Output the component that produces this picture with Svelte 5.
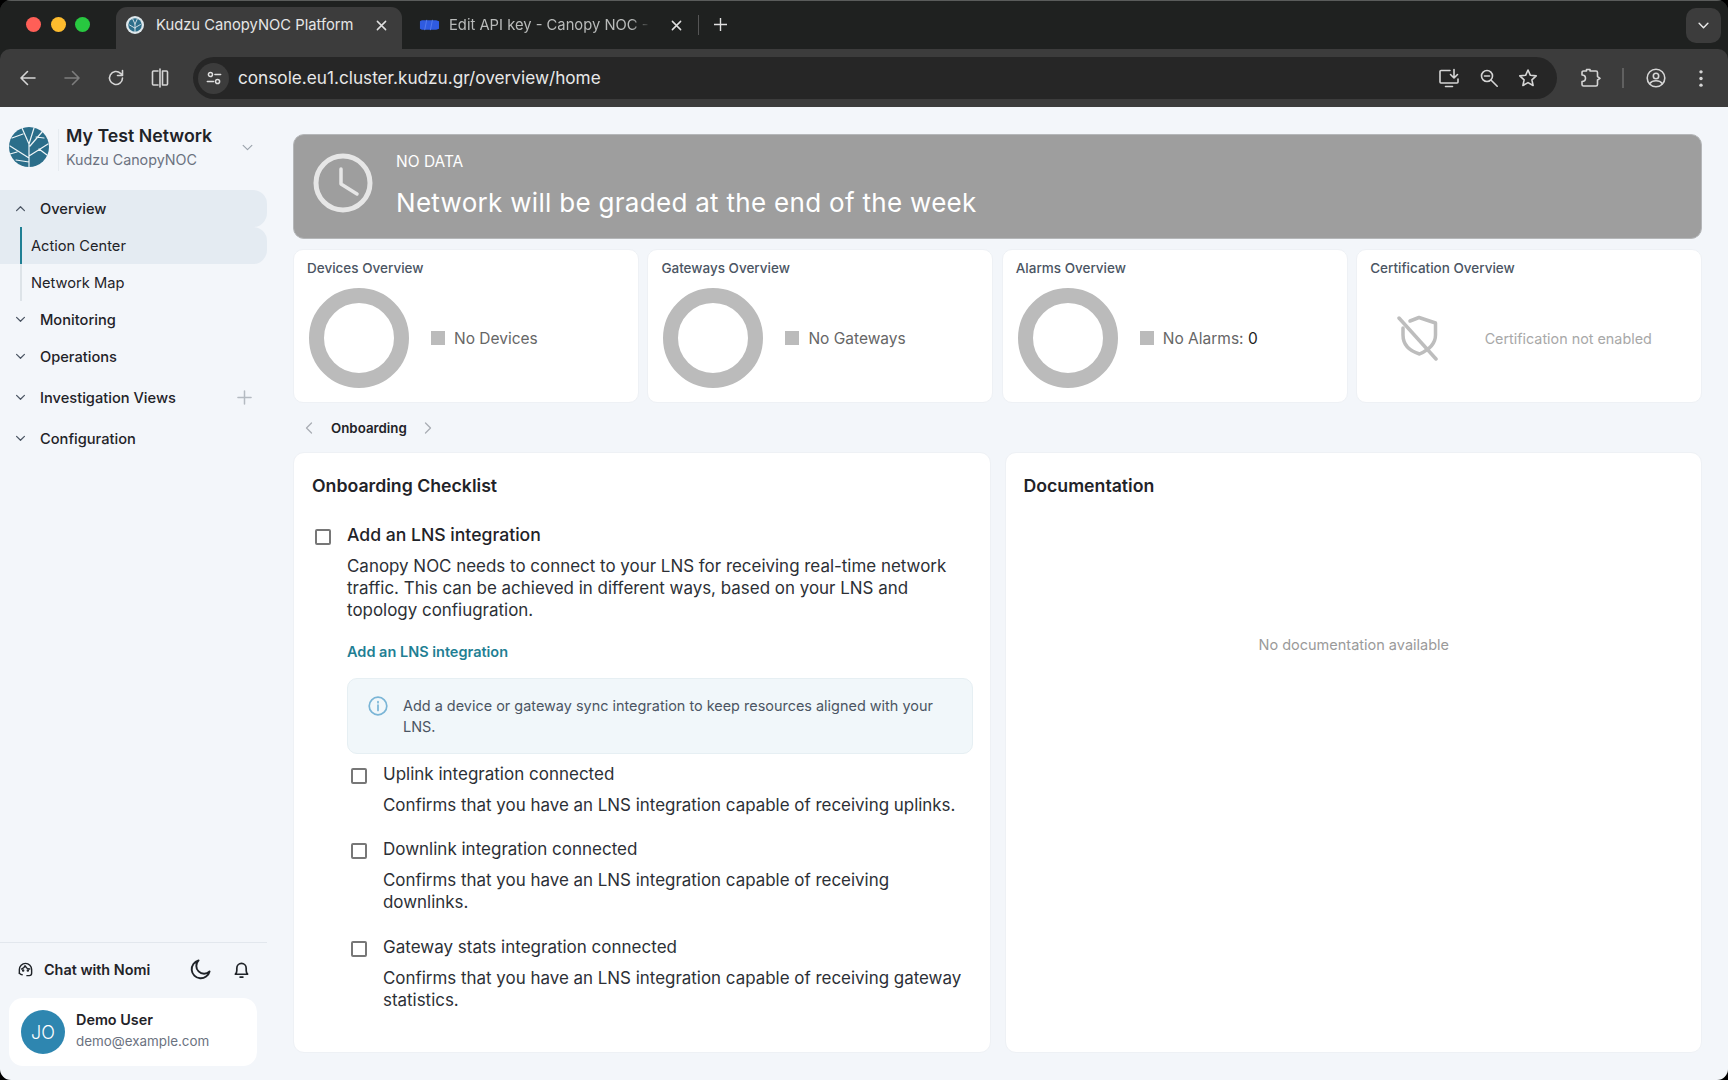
<script>
	const navTop = [
		{ label: 'Monitoring' },
		{ label: 'Operations' },
		{ label: 'Investigation Views', add: true },
		{ label: 'Configuration' }
	];

	const overviewCards = [
		{ title: 'Devices Overview', legend: 'No Devices' },
		{ title: 'Gateways Overview', legend: 'No Gateways' },
		{ title: 'Alarms Overview', legend: 'No Alarms:', count: '0' }
	];

	const checks = [
		{
			label: 'Uplink integration connected',
			desc: 'Confirms that you have an LNS integration capable of receiving uplinks.'
		},
		{
			label: 'Downlink integration connected',
			desc: 'Confirms that you have an LNS integration capable of receiving downlinks.'
		},
		{
			label: 'Gateway stats integration connected',
			desc: 'Confirms that you have an LNS integration capable of receiving gateway statistics.'
		}
	];
</script>

<div class="window">
	<div class="tabstrip">
		<div class="lights">
			<span class="light red"></span>
			<span class="light yellow"></span>
			<span class="light green"></span>
		</div>
		<div class="tab active">
			<svg class="favicon" viewBox="0 0 40 40">
				<circle cx="20" cy="20" r="20" fill="#dfe8ec" />
				<circle cx="20" cy="20" r="15" fill="#2b6e8a" />
				<path d="M20 35V18L15 7M20 18l5-11M20 27 8 20M20 26l12-7" stroke="#dfe8ec" stroke-width="2" fill="none" />
			</svg>
			<span class="tab-title">Kudzu CanopyNOC Platform</span>
			<svg class="tab-x" viewBox="0 0 12 12"><path d="M1.500 1.500l9 9M10.500 1.500l-9 9" /></svg>
		</div>
		<div class="tab second">
			<svg class="favicon wide" viewBox="0 0 22 14">
				<path d="M3 2h15l3 1v8l-3 1H3L1 11V3z" fill="#2f5be0" />
				<path d="M8 2 6 12M14 2l-2 10" stroke="#5f84ee" stroke-width=".8" />
			</svg>
			<span class="tab-title dim">Edit API key - Canopy NOC -</span>
			<svg class="tab-x" viewBox="0 0 12 12"><path d="M1.500 1.500l9 9M10.500 1.500l-9 9" /></svg>
		</div>
		<span class="tab-sep"></span>
		<svg class="tab-plus" viewBox="0 0 14 14"><path d="M7 0v14M0 7h14" /></svg>
		<div class="tab-menu">
			<svg viewBox="0 0 12 8"><path d="M1 1.500l5 5 5-5" /></svg>
		</div>
	</div>

	<div class="toolbar">
		<div class="nav-btns">
			<svg class="tool" viewBox="0 0 20 20"><path d="M17 10H3.500M9.500 3.500 3 10l6.500 6.500" /></svg>
			<svg class="tool off" viewBox="0 0 20 20"><path d="M3 10h13.500M10.500 3.500 17 10l-6.500 6.500" /></svg>
			<svg class="tool" viewBox="0 0 20 20"><path d="M16.500 10a6.500 6.500 0 1 1-2-4.700L16.500 7.500M16.500 2.500v5h-5" /></svg>
			<svg class="tool" viewBox="0 0 20 20"><path d="M8 3H3.500A1 1 0 0 0 2.500 4v12a1 1 0 0 0 1 1H8M10 1v18M12.500 3h4a1 1 0 0 1 1 1v12a1 1 0 0 1-1 1h-4z" /></svg>
		</div>
		<div class="omnibox">
			<span class="chip">
				<svg viewBox="0 0 18 18">
					<circle cx="5" cy="5" r="2.300" />
					<path d="M10 5h6.500M1.500 13H8.500" />
					<circle cx="13" cy="13" r="2.300" />
				</svg>
			</span>
			<span class="url">console.eu1.cluster.kudzu.gr/overview/home</span>
			<div class="omni-icons">
				<svg class="tool" viewBox="0 0 22 20"><path d="M12 2.500H3a1 1 0 0 0-1 1V14a1 1 0 0 0 1 1h16a1 1 0 0 0 1-1v-3M16 1.500V10M12.500 6.500 16 10l3.500-3.500M7.500 18.500h7" /></svg>
				<svg class="tool" viewBox="0 0 20 20"><circle cx="8" cy="8" r="5.500" /><path d="M5.500 8h5M12.200 12.200l6 6" /></svg>
				<svg class="tool" viewBox="0 0 20 20"><path d="M10 2l2.400 5.300 5.800.6-4.300 3.900 1.200 5.700L10 14.600l-5.100 2.900 1.200-5.700-4.300-3.900 5.800-.6z" /></svg>
			</div>
		</div>
		<div class="chrome-end">
			<svg class="tool" viewBox="0 0 20 20"><path d="M1 4.500A1.500 1.500 0 0 1 2.500 3H5.500V1.500H9V3H15A1.500 1.500 0 0 1 16.500 4.500V8.500L19 10.300 16.500 12V16.500A1.500 1.500 0 0 1 15 18H2.500A1.500 1.500 0 0 1 1 16.500V13.500C3.500 13.500 4.500 12 4.500 10.300S3.500 7 1 7Z" /></svg>
			<span class="end-sep"></span>
			<svg class="tool" viewBox="0 0 20 20"><circle cx="10" cy="10" r="8.800" /><circle cx="10" cy="8" r="2.700" /><path d="M3.800 15.500c1.500-2 3.700-2.700 6.200-2.700s4.700.7 6.200 2.700" /></svg>
			<svg class="dots" viewBox="0 0 6 20"><circle cx="3" cy="3" r="1.800" /><circle cx="3" cy="10" r="1.800" /><circle cx="3" cy="17" r="1.800" /></svg>
		</div>
	</div>

	<div class="page">
		<aside class="sidebar">
			<div class="org">
				<svg class="logo" viewBox="0 0 40 40">
					<circle cx="20" cy="20" r="20" fill="#2b6e8a" />
					<path d="M20 40V17L13 1M20 17l5-16M21 19l12-14M20 31 1 19M20 29l19-12M20 35 7 33M8 25 1 27M30 22l8 6M27 10l8 1M14 7 3 11"
						stroke="#eef5f7" stroke-width="1.200" fill="none" />
				</svg>
				<div class="org-text">
					<div class="org-name">My Test Network</div>
					<div class="org-sub">Kudzu CanopyNOC</div>
				</div>
				<svg class="org-chevron" viewBox="0 0 12 8"><path d="M1 1.500l5 5 5-5" /></svg>
			</div>

			<nav class="nav">
				<div class="nav-row open">
					<svg class="chev" viewBox="0 0 12 8"><path d="M1.500 6.500l4.500-4.500 4.500 4.500" /></svg>
					<span>Overview</span>
				</div>
				<div class="sub-row current"><span class="sub-label">Action Center</span></div>
				<div class="sub-row"><span class="sub-label">Network Map</span></div>
				{#each navTop as item}
					<div class="nav-row" class:tall={item.add}>
						<svg class="chev" viewBox="0 0 12 8"><path d="M1.500 1.500l4.500 4.500 4.500-4.500" /></svg>
						<span>{item.label}</span>
						{#if item.add}
							<svg class="nav-add" viewBox="0 0 16 16"><path d="M8 1v14M1 8h14" /></svg>
						{/if}
					</div>
				{/each}
			</nav>

			<div class="side-foot">
				<div class="foot-row">
					<svg class="nomi" viewBox="0 0 18 18">
						<path d="M2.500 13V9a6.500 6.500 0 0 1 13 0v4c0 1.500-1 2.500-2.500 2.500h-2.500" />
						<path d="M5 8.500C6.500 8 8 6.500 8.500 5c1 2 3 3.500 5 3.500" />
						<path d="M2.500 13c1 1 2 1.500 3 1.500" />
						<circle cx="6.500" cy="10" r=".6" />
						<circle cx="11.500" cy="10" r=".6" />
					</svg>
					<span class="chat">Chat with Nomi</span>
					<svg class="moon" viewBox="0 0 22 22"><path d="M9 1.500a9.500 9.500 0 1 0 11.500 11.500A8 8 0 0 1 9 1.500z" /></svg>
					<svg class="bell" viewBox="0 0 16 18"><path d="M1.500 13.500c1-1 1.500-2 1.500-4V7a5 5 0 0 1 10 0v2.500c0 2 .5 3 1.500 4zM6.500 16.500h3" /></svg>
				</div>
				<div class="user">
					<div class="avatar">JO</div>
					<div class="user-text">
						<div class="user-name">Demo User</div>
						<div class="user-mail">demo@example.com</div>
					</div>
				</div>
			</div>
		</aside>

		<main class="main">
			<section class="banner">
				<svg class="clock" viewBox="0 0 60 60">
					<circle cx="30" cy="30" r="27" />
					<path class="hands" d="M28 16V31L44 41" />
				</svg>
				<div class="banner-text">
					<div class="banner-tag">NO DATA</div>
					<div class="banner-msg">Network will be graded at the end of the week</div>
				</div>
			</section>

			<section class="cards">
				{#each overviewCards as card}
					<div class="card">
						<div class="card-title">{card.title}</div>
						<div class="card-body">
							<div class="donut"></div>
							<span class="swatch"></span>
							<span class="legend">{card.legend}{#if card.count}&nbsp;<b>{card.count}</b>{/if}</span>
						</div>
					</div>
				{/each}
				<div class="card">
					<div class="card-title">Certification Overview</div>
					<div class="card-body cert">
						<svg class="shield" viewBox="0 0 42 46">
							<path d="M13 6 22 2.500 38.500 8V20C38.500 29 31.500 35 22.500 39 13 36 6 30 6 20V13" />
							<path d="M2 3 39 44" />
						</svg>
						<span class="cert-text">Certification not enabled</span>
					</div>
				</div>
			</section>

			<div class="pager">
				<svg class="pager-chev" viewBox="0 0 8 12"><path d="M6.500 1 1.500 6l5 5" /></svg>
				<span>Onboarding</span>
				<svg class="pager-chev" viewBox="0 0 8 12"><path d="M1.500 1l5 5-5 5" /></svg>
			</div>

			<section class="panels">
				<div class="panel">
					<h2>Onboarding Checklist</h2>
					<div class="task">
						<span class="box"></span>
						<div class="task-main">
							<div class="task-title">Add an LNS integration</div>
							<p class="task-desc">Canopy NOC needs to connect to your LNS for receiving real-time network traffic. This can be achieved in different ways, based on your LNS and topology confiugration.</p>
							<div class="task-link">Add an LNS integration</div>
							<div class="info">
								<svg class="info-icon" viewBox="0 0 20 20">
									<circle cx="10" cy="10" r="8.800" />
									<path d="M10 9v5.500M10 5.500v1.200" />
								</svg>
								<span>Add a device or gateway sync integration to keep resources aligned with your LNS.</span>
							</div>
						</div>
					</div>
					<div class="checks">
						{#each checks as check}
							<div class="check">
								<span class="box"></span>
								<div>
									<div class="check-label">{check.label}</div>
									<div class="check-desc">{check.desc}</div>
								</div>
							</div>
						{/each}
					</div>
				</div>

				<div class="panel docs">
					<h2>Documentation</h2>
					<div class="docs-empty">No documentation available</div>
				</div>
			</section>
		</main>
	</div>
</div>

<style>
	:global(body) {
		background-color: #000;
		font-family: Inter, "Noto Sans", sans-serif;
	}

	svg {
		flex: none;
		display: block;
		fill: none;
		stroke-linecap: round;
		stroke-linejoin: round;
	}

	.window {
		width: 1728px;
		height: 1080px;
		display: flex;
		flex-direction: column;
		overflow: hidden;
		border-radius: 11px;
		background: #1f2120;
	}

	/* browser chrome */
	.tabstrip {
		height: 49px;
		flex: none;
		display: flex;
		align-items: flex-end;
		background: #1f2120;
		border-top: 1px solid #5a5c5b;
		box-sizing: border-box;
	}

	.lights {
		width: 116px;
		flex: none;
		height: 48px;
		padding: 0 0 2px 26px;
		box-sizing: border-box;
		display: flex;
		gap: 9.500px;
		align-items: center;
	}

	.light {
		width: 15px;
		height: 15px;
		border-radius: 50%;
	}
	.red { background: #ff5f57; }
	.yellow { background: #febc2e; }
	.green { background: #28c840; }

	.tab {
		height: 42px;
		display: flex;
		align-items: center;
		box-sizing: border-box;
		padding-bottom: 6px;
		color: #e6e6e6;
		font-size: 14.750px;
		white-space: nowrap;
	}

	.tab.active {
		width: 286px;
		background: #3c3c3c;
		border-radius: 11px 11px 0 0;
		padding-left: 10px;
	}

	.tab.second {
		width: 298px;
		padding-left: 17px;
	}

	.favicon {
		width: 18px;
		height: 18px;
		margin-right: 12px;
	}

	.favicon.wide {
		width: 21px;
		height: 14px;
		margin-right: 9px;
	}

	.tab-title {
		width: 220px;
	}

	.tab-title.dim {
		width: 202px;
		color: #b9bbba;
		-webkit-mask-image: linear-gradient(to right, #000 90%, transparent);
		mask-image: linear-gradient(to right, #000 90%, transparent);
	}

	.tab-x {
		width: 11px;
		height: 11px;
		stroke: #e0e0e0;
		stroke-width: 1.600;
	}

	.tab.second .tab-x {
		margin-left: 20px;
	}

	.tab-sep {
		width: 1px;
		height: 20px;
		background: #555;
		margin: 0 15px 14px -2px;
	}

	.tab-plus {
		width: 13px;
		height: 13px;
		stroke: #e0e0e0;
		stroke-width: 1.500;
		margin-bottom: 18px;
	}

	.tab-menu {
		margin-left: auto;
		margin-right: 7px;
		margin-bottom: 6px;
		width: 35px;
		height: 35px;
		border-radius: 10px;
		background: #3c3c3c;
		display: flex;
		align-items: center;
		justify-content: center;
	}

	.tab-menu svg {
		width: 11px;
		height: 7px;
		stroke: #e8e8e8;
		stroke-width: 1.700;
	}

	.toolbar {
		height: 58px;
		flex: none;
		display: flex;
		align-items: center;
		background: #3c3c3c;
		border-radius: 10px 10px 0 0;
	}

	.tool {
		width: 20px;
		height: 20px;
		stroke: #d5d5d5;
		stroke-width: 1.600;
	}

	.tool.off {
		stroke: #7d7d7d;
	}

	.nav-btns {
		width: 193px;
		flex: none;
		display: flex;
		gap: 24px;
		padding-left: 18px;
		box-sizing: border-box;
	}

	.omnibox {
		width: 1364px;
		height: 42px;
		flex: none;
		display: flex;
		align-items: center;
		background: #262626;
		border-radius: 21px;
		padding-left: 5px;
		box-sizing: border-box;
	}

	.chip {
		width: 31px;
		height: 31px;
		border-radius: 50%;
		background: #3c3c3c;
		display: flex;
		align-items: center;
		justify-content: center;
	}

	.chip svg {
		width: 16px;
		height: 16px;
		stroke: #dedede;
		stroke-width: 1.700;
	}

	.url {
		margin-left: 9px;
		margin-top: -1px;
		font-size: 17.200px;
		color: #e8e8e8;
	}

	.omni-icons {
		margin-left: auto;
		margin-right: 19px;
		display: flex;
		gap: 19px;
		align-items: center;
	}

	.omni-icons .tool:first-child {
		width: 22px;
	}

	.chrome-end {
		display: flex;
		align-items: center;
		padding-left: 24px;
	}

	.end-sep {
		width: 2px;
		height: 20px;
		background: #606060;
		margin: 0 22px 0 21px;
	}

	.dots {
		width: 6px;
		height: 19px;
		fill: #d5d5d5;
		margin-left: 32px;
	}

	/* app */
	.page {
		flex: 1;
		min-height: 0;
		display: flex;
		background: #f3f6fa;
		color: #1f2328;
	}

	.sidebar {
		width: 267px;
		flex: none;
		display: flex;
		flex-direction: column;
	}

	.org {
		height: 60px;
		box-sizing: border-box;
		display: flex;
		align-items: center;
		padding: 20px 14px 0 9px;
	}

	.logo {
		width: 40px;
		height: 40px;
	}

	.org-text {
		margin: 5px 0 0 9px;
		padding-left: 7px;
		border-left: 1px solid #e6ebf0;
	}

	.org-name {
		font-size: 17.750px;
		font-weight: 600;
		line-height: 22px;
		margin-top: -4px;
	}

	.org-sub {
		font-size: 14.300px;
		line-height: 22px;
		margin-top: 2px;
		color: #6b7280;
	}

	.org-chevron {
		width: 11px;
		height: 7px;
		stroke: #9aa2ab;
		stroke-width: 1.300;
		margin-left: auto;
	}

	.nav {
		margin-top: 23px;
		font-size: 14.650px;
	}

	.nav-row {
		height: 37px;
		display: flex;
		align-items: center;
		padding-left: 15px;
		font-weight: 500;
		border-radius: 0 14px 14px 0;
	}

	.nav-row.tall {
		height: 45px;
	}

	.nav-row.open,
	.sub-row.current {
		background: #e4ebf2;
	}

	.chev {
		width: 11px;
		height: 7px;
		stroke: #4b5563;
		stroke-width: 1.400;
		margin-right: 14px;
	}

	.nav-add {
		width: 15px;
		height: 15px;
		stroke: #b4bac1;
		stroke-width: 1.600;
		margin-left: auto;
		margin-right: 15px;
	}

	.sub-row {
		height: 37px;
		padding-left: 20px;
		display: flex;
		border-radius: 0 14px 14px 0;
	}

	.sub-label {
		flex: 1;
		display: flex;
		align-items: center;
		padding-left: 9px;
		border-left: 2px solid #dde3e8;
	}

	.sub-row.current .sub-label {
		border-left-color: #1f7f94;
	}

	.side-foot {
		margin-top: auto;
		border-top: 1px solid #e2e7ed;
		padding-bottom: 14px;
	}

	.foot-row {
		height: 55px;
		box-sizing: border-box;
		padding: 0 0 2px 17px;
		display: flex;
		align-items: center;
	}

	.nomi {
		width: 17px;
		height: 17px;
		stroke: #1f2328;
		stroke-width: 1.500;
	}

	.chat {
		margin-left: 10px;
		font-size: 14.400px;
		font-weight: 600;
	}

	.moon {
		width: 21px;
		height: 21px;
		stroke: #1f2328;
		stroke-width: 2;
		margin-left: 40px;
	}

	.bell {
		width: 15px;
		height: 18px;
		stroke: #1f2328;
		stroke-width: 1.800;
		margin-left: 23px;
	}

	.user {
		height: 68px;
		margin-left: 9px;
		width: 248px;
		box-sizing: border-box;
		background: #fff;
		border-radius: 14px;
		display: flex;
		align-items: center;
		padding-left: 12px;
		gap: 11px;
	}

	.avatar {
		width: 44px;
		height: 44px;
		border-radius: 50%;
		background: #2e86b0;
		color: #fff;
		font-size: 18px;
		font-weight: 300;
		display: flex;
		align-items: center;
		justify-content: center;
	}

	.user-text {
		margin-top: -4px;
	}

	.user-name {
		font-size: 14.400px;
		font-weight: 600;
		line-height: 20px;
	}

	.user-mail {
		font-size: 13.400px;
		line-height: 20px;
		color: #6b7280;
		margin-top: 1px;
	}

	.main {
		flex: 1;
		min-width: 0;
		padding: 27px 26px;
		display: flex;
		flex-direction: column;
	}

	.banner {
		height: 105px;
		flex: none;
		box-sizing: border-box;
		background: #9e9e9e;
		border: 1px solid #b5b7b9;
		border-radius: 11px;
		display: flex;
		align-items: center;
		padding-left: 19px;
		color: #fff;
	}

	.clock {
		width: 60px;
		height: 60px;
		stroke: #e6e6e6;
		stroke-width: 5;
		margin: -8px 23px 0 0;
	}

	.hands {
		stroke-width: 3.500;
	}

	.banner-tag {
		font-size: 15.500px;
		line-height: 20px;
		margin-top: -3px;
	}

	.banner-msg {
		font-size: 26px;
		line-height: 32px;
		margin-top: 15px;
		letter-spacing: .3px;
	}

	.cards {
		margin-top: 10px;
		display: grid;
		grid-template-columns: repeat(4, 1fr);
		gap: 8.500px;
		flex: none;
	}

	.card {
		height: 154px;
		box-sizing: border-box;
		background: #fff;
		border: 1px solid #eef1f5;
		border-radius: 10px;
		padding: 9px 13px 0 13px;
	}

	.card-title {
		font-size: 13.500px;
		font-weight: 500;
		line-height: 18px;
		color: #4b5563;
	}

	.card-body {
		display: flex;
		align-items: center;
		margin-top: 11px;
	}

	.donut {
		width: 100px;
		height: 100px;
		box-sizing: border-box;
		border: 15px solid #bbb;
		border-radius: 50%;
		margin-left: 2px;
	}

	.swatch {
		width: 14px;
		height: 14px;
		background: #bbb;
		margin-left: 22px;
	}

	.legend {
		margin-left: 9px;
		font-size: 15.500px;
		color: #666;
	}

	.legend b {
		font-weight: 400;
		color: #222;
	}

	.card-body.cert {
		height: 100px;
	}

	.shield {
		width: 42px;
		height: 46px;
		stroke: #bdbdbd;
		stroke-width: 3.500;
		margin-left: 27px;
	}

	.cert-text {
		margin-left: 45.500px;
		font-size: 14.350px;
		color: #a8a8a8;
	}

	.pager {
		height: 49px;
		flex: none;
		box-sizing: border-box;
		padding: 1px 0 0 12px;
		display: flex;
		align-items: center;
		font-size: 13.300px;
		font-weight: 600;
	}

	.pager-chev {
		width: 8px;
		height: 12px;
		stroke: #a9aeb4;
		stroke-width: 1.300;
	}

	.pager span {
		margin: 0 17px 0 18px;
	}

	.panels {
		flex: 1;
		min-height: 0;
		display: grid;
		grid-template-columns: 1fr 1fr;
		gap: 14px;
	}

	.panel {
		background: #fff;
		border: 1px solid #eef1f5;
		border-radius: 11px;
		padding: 22px 17px 0 18px;
		box-sizing: border-box;
	}

	h2 {
		margin: 0;
		font-size: 17.700px;
		font-weight: 600;
		line-height: 22px;
	}

	.task {
		display: flex;
		margin-top: 27px;
		margin-left: 3px;
	}

	.box {
		width: 16px;
		height: 16px;
		flex: none;
		box-sizing: border-box;
		border: 2px solid #777;
		border-radius: 2px;
		margin-top: 5px;
	}

	.task-main {
		margin-left: 16px;
		flex: 1;
	}

	.task-title {
		font-size: 17.600px;
		font-weight: 500;
		line-height: 22px;
	}

	.task-desc {
		margin: 9px 0 0;
		font-size: 16.950px;
		line-height: 22px;
		color: #2c3036;
	}

	.task-link {
		margin-top: 19.500px;
		font-size: 14.500px;
		font-weight: 600;
		line-height: 22px;
		color: #1f7f94;
	}

	.info {
		margin-top: 15px;
		height: 76px;
		box-sizing: border-box;
		background: #f1f7fa;
		border: 1px solid #e6eff3;
		border-radius: 10px;
		display: flex;
		padding: 16px 30px 0 20px;
		gap: 15px;
		font-size: 14.450px;
		line-height: 21px;
		color: #4b5563;
	}

	.info-icon {
		width: 20px;
		height: 20px;
		stroke: #7ab5d6;
		stroke-width: 1.700;
		margin-top: 1px;
	}

	.checks {
		margin-top: 8px;
		margin-left: 38.500px;
		display: flex;
		flex-direction: column;
		gap: 21.700px;
	}

	.check {
		display: flex;
		gap: 16.500px;
	}

	.check .box {
		margin-top: 6px;
	}

	.check-label {
		font-size: 17px;
		line-height: 24px;
		color: #2c3036;
	}

	.check-desc {
		margin-top: 8px;
		font-size: 16.930px;
		line-height: 22px;
		color: #2c3036;
	}

	.docs {
		display: flex;
		flex-direction: column;
	}

	.docs-empty {
		margin-top: 139px;
		text-align: center;
		font-size: 14.500px;
		color: #9a9a9a;
	}
</style>
